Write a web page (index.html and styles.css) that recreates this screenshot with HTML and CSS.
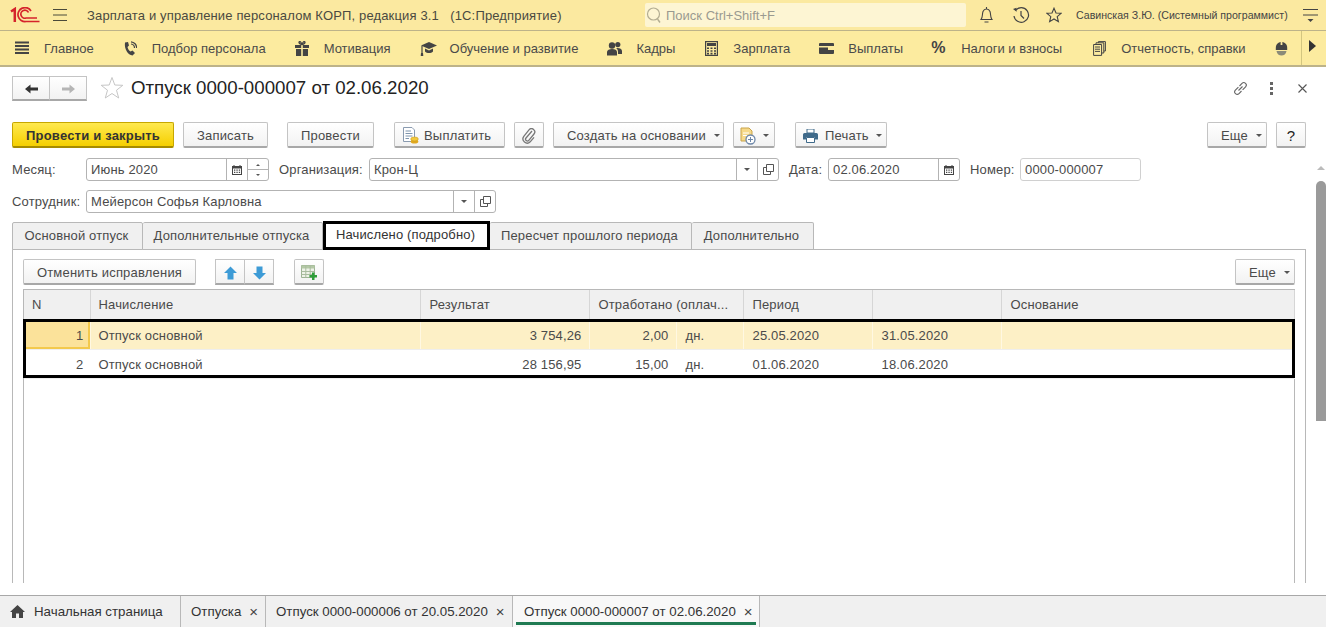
FILE: index.html
```html
<!DOCTYPE html>
<html lang="ru">
<head>
<meta charset="utf-8">
<title>Отпуск 0000-000007 от 02.06.2020</title>
<link rel="stylesheet" href="styles.css">
</head>
<body>
<header class="topbar">
  <svg class="logo" width="30" height="16" viewBox="0 0 30 16"><g fill="none" stroke="#d5232b"><path d="M1 4.500 L4.800 2 V15" stroke-width="2.500"/><path d="M21 4 A7 7 0 1 0 16 14.500 H29.500" stroke-width="1.700"/><path d="M18.500 5.500 A4 4 0 1 0 16 11 H27" stroke-width="1.700"/></g></svg>
  <svg class="burger" width="14" height="12" viewBox="0 0 14 12"><path d="M0 .5H14M0 6H14M0 11.500H14" stroke="#4a4a3a" stroke-width="1"/></svg>
  <div class="app-title">Зарплата и управление персоналом КОРП, редакция 3.1&nbsp;&nbsp;&nbsp;(1С:Предприятие)</div>
  <div class="search">
    <svg width="16" height="18" viewBox="0 0 16 18"><circle cx="7.500" cy="8" r="6" fill="none" stroke="#b3ad92" stroke-width="1.200"/><path d="M11.500 13 L14 16.500" stroke="#b3ad92" stroke-width="1.400"/></svg>
    <span>Поиск Ctrl+Shift+F</span>
  </div>
  <svg class="tb-bell" width="15" height="18" viewBox="0 0 15 18"><path d="M2 13.500 C4 11 3 8 4 5.500 C4.800 3.500 6 3 7.500 3 C9 3 10.200 3.500 11 5.500 C12 8 11 11 13 13.500 Z M7.500 3 V1 M5.500 16 H9.500" fill="none" stroke="#444" stroke-width="1.100"/></svg>
  <svg class="tb-hist" width="18" height="18" viewBox="0 0 18 18"><path d="M3.500 4.500 A7.300 7.300 0 1 1 2 10" fill="none" stroke="#444" stroke-width="1.200"/><path d="M1 3 L4.500 1.800 L4.600 5.800 Z" fill="#444"/><path d="M9 5 V9.500 L12 12.500" fill="none" stroke="#444" stroke-width="1.200"/></svg>
  <svg class="tb-star" width="16" height="16" viewBox="0 0 16 16"><path d="M8 1.200 L10 6 L15 6.300 L11.200 9.600 L12.400 14.700 L8 12 L3.600 14.700 L4.800 9.600 L1 6.300 L6 6 Z" fill="none" stroke="#444" stroke-width="1.100"/></svg>
  <div class="user">Савинская З.Ю. (Системный программист)</div>
  <svg class="tb-menu" width="15" height="16" viewBox="0 0 15 16"><path d="M0 2.500H15M0 8H15" stroke="#444" stroke-width="1"/><path d="M4.500 12 H10.500 L7.500 15 Z" fill="#444"/></svg>
</header>

<nav class="sections">
  <a class="sec">
    <svg width="14" height="14" viewBox="0 0 14 14"><path d="M0 1H14M0 4.500H14M0 8H14M0 11.500H14" stroke="#444" stroke-width="1.800" transform="translate(0 .5)"/></svg>
    <span>Главное</span></a>
  <a class="sec">
    <svg width="14" height="15" viewBox="0 0 14 15"><path d="M2 1.500 L5 1 L6 4.500 L4.500 6 C5 8 6 9.500 7.500 10.500 L9.500 9.500 L12 12 L9.500 14.500 C5 14 1 8 2 1.500Z" fill="#444"/><path d="M8 3 A4 4 0 0 1 11.500 7 M8 .8 A6 6 0 0 1 13.600 7" fill="none" stroke="#444" stroke-width="1.200"/></svg>
    <span>Подбор персонала</span></a>
  <a class="sec">
    <svg width="14" height="15" viewBox="0 0 14 15"><path d="M0 4H6.200V7H0ZM7.800 4H14V7H7.800ZM1 8H6.200V15H1ZM7.800 8H13V15H7.800Z" fill="#444"/><path d="M7 3.500 C5 3 3.500 2 4.200 .8 C5 0 6.500 1.500 7 3.500 C7.500 1.500 9 0 9.800 .8 C10.500 2 9 3 7 3.500Z" fill="none" stroke="#444" stroke-width="1.300"/></svg>
    <span>Мотивация</span></a>
  <a class="sec sec-wide">
    <svg width="17" height="15" viewBox="0 0 17 15"><path d="M9 1 L17 4.500 L9 8 L1 4.500Z" fill="#444"/><path d="M5 7.500 V10.500 C7 12.500 11 12.500 13 10.500 V7.500 L9 9.500Z" fill="#444"/><path d="M2 5 V12" stroke="#444" stroke-width="1.200"/><path d="M1 12 H3 L3.300 15 H.7Z" fill="#444"/></svg>
    <span>Обучение и развитие</span></a>
  <a class="sec sec-staff">
    <svg width="15" height="15" viewBox="0 0 15 15"><circle cx="5" cy="4.500" r="3.200" fill="#444"/><circle cx="10.800" cy="3.600" r="2.600" fill="#444"/><path d="M0 14.500 V11 C0 9 2.500 8 5 8 C8 8 10 9 10 11 V14.500Z" fill="#444"/><path d="M9 7 C12 6.500 15 7.500 15 10 V13 H11 V11 C11 9 10.500 8 9 7Z" fill="#444"/></svg>
    <span>Кадры</span></a>
  <a class="sec">
    <svg width="13" height="15" viewBox="0 0 13 15"><rect x=".6" y=".6" width="11.800" height="13.800" fill="none" stroke="#444" stroke-width="1.200"/><rect x="2" y="2" width="9" height="3" fill="#444"/><path d="M2 6.500h2v1.600h-2zM5.500 6.500h2v1.600h-2zM9 6.500h2v1.600h-2zM2 9.200h2v1.600h-2zM5.500 9.200h2v1.600h-2zM9 9.200h2v1.600h-2zM2 11.800h2v1.600h-2zM5.500 11.800h2v1.600h-2zM9 11.800h2v1.600h-2z" fill="#444"/></svg>
    <span>Зарплата</span></a>
  <a class="sec sec-pay">
    <svg width="15" height="11" viewBox="0 0 15 11"><path d="M0 1 Q0 0 1 0H14Q15 0 15 1V3H0Z" fill="#444"/><path d="M0 4.500H9V7H15V10Q15 11 14 11H1Q0 11 0 10Z" fill="#444"/></svg>
    <span>Выплаты</span></a>
  <a class="sec sec-tax">
    <span class="pct">%</span>
    <span>Налоги и взносы</span></a>
  <a class="sec">
    <svg width="13" height="15" viewBox="0 0 13 15"><path d="M.6 3.500H8.600V14.400H.6Z M3 3.500V1.800H10.800V12H8.600 M5.400 1.800V.6H12.400V10H10.800" fill="none" stroke="#444" stroke-width="1"/><path d="M2 6H7M2 8.200H7M2 10.400H7" stroke="#444" stroke-width="1"/></svg>
    <span>Отчетность, справки</span></a>
  <a class="sec sec-last">
    <svg width="13" height="15" viewBox="0 0 13 15"><path d="M6.500 1 C3 1 .8 3.500 .8 7 V9 H12.200 V7 C12.200 3.500 10 1 6.500 1Z" fill="#444"/><path d="M5.600 .8 H7.400 V4 H5.600Z" fill="#fbe9a0"/><path d="M1.500 10 H11.500 C11 13 9 14.500 6.500 14.500 C4 14.500 2 13 1.500 10Z" fill="#8a8a78"/></svg>
  </a>
  <div class="sec-more"><svg width="7" height="12" viewBox="0 0 7 12"><path d="M0 0 L7 6 L0 12Z" fill="#333"/></svg></div>
</nav>

<main class="form">
  <div class="title-row">
    <div class="btn-group nav-group">
      <button class="btn nav-btn"><svg width="13" height="10" viewBox="0 0 13 10"><path d="M0 5 L5.500 .5 V3.500 H13 V6.500 H5.500 V9.500Z" fill="#333"/></svg></button>
      <button class="btn nav-btn"><svg width="13" height="10" viewBox="0 0 13 10"><path d="M13 5 L7.500 .5 V3.500 H0 V6.500 H7.500 V9.500Z" fill="#b5b5b5"/></svg></button>
    </div>
    <svg class="title-star" width="24" height="24" viewBox="0 0 24 24"><path d="M12 1.500 L14.800 9 L22.800 9.300 L16.500 14.200 L18.700 22 L12 17.500 L5.300 22 L7.500 14.200 L1.200 9.300 L9.200 9 Z" fill="none" stroke="#c6c6c6" stroke-width="1"/></svg>
    <h1 class="doc-title">Отпуск 0000-000007 от 02.06.2020</h1>
    <svg class="t-link" width="15" height="15" viewBox="0 0 15 15"><g fill="none" stroke="#666" stroke-width="1.100"><path d="M6.500 5 L9 2.400 A2.400 2.400 0 0 1 12.600 5.800 L9.600 8.900"/><path d="M8.500 10 L6 12.600 A2.400 2.400 0 0 1 2.400 9.200 L5.400 6.100"/><path d="M5.500 9.500 L9.500 5.500"/></g></svg>
    <svg class="t-dots" width="3" height="13" viewBox="0 0 3 13"><path d="M0 0h3v3h-3zM0 5h3v3h-3zM0 10h3v3h-3z" fill="#666"/></svg>
    <svg class="t-close" width="9" height="9" viewBox="0 0 9 9"><path d="M.5 .5 L8.500 8.500 M8.500 .5 L.5 8.500" stroke="#555" stroke-width="1.100"/></svg>
  </div>

  <div class="cmd-row">
    <button class="btn primary w-post-close">Провести и закрыть</button>
    <button class="btn w-save">Записать</button>
    <button class="btn w-post">Провести</button>
    <button class="btn w-pay">
      <svg width="17" height="17" viewBox="0 0 17 17"><path d="M1.500 .5H10L12.500 3V14.500H1.500Z" fill="#fff" stroke="#8a9bb0"/><path d="M3.500 4H9M3.500 6.500H10.500M3.500 9H10.500M3.500 11.500H7" stroke="#7d94ad"/><ellipse cx="12.500" cy="14.500" rx="3.800" ry="2" fill="#e0a820"/><ellipse cx="12.500" cy="12" rx="3.800" ry="2" fill="#f2c83a" stroke="#c99a1c" stroke-width=".6"/></svg>
      <span>Выплатить</span></button>
    <button class="btn w-clip">
      <svg width="14" height="16" viewBox="0 0 14 16"><path d="M10 3 L4 10 A1.800 1.800 0 0 0 6.800 12.300 L12 6 A3.200 3.200 0 0 0 7 1.900 L1.800 8.400 A4.200 4.200 0 0 0 8.200 13.800 L12 9.400" fill="none" stroke="#777" stroke-width="1.300"/></svg></button>
    <button class="btn w-create">Создать на основании<i class="caret"></i></button>
    <button class="btn w-more-doc">
      <svg width="16" height="18" viewBox="0 0 16 18"><path d="M1 1H9L12 4V14H1Z" fill="#f6d98a" stroke="#c9a44a"/><path d="M3 6H9M3 8.500H7" stroke="#fff"/><circle cx="10.500" cy="12.500" r="4.500" fill="#fff" stroke="#6d87a8" stroke-width="1.300"/><path d="M8 12.500H13M10.500 10V15" stroke="#6d87a8"/></svg>
      <i class="caret"></i></button>
    <button class="btn w-print">
      <svg width="15" height="14" viewBox="0 0 15 14"><path d="M4 0H11V4H4Z" fill="#fff" stroke="#3f6a8a"/><path d="M1.500 4H13.500Q15 4 15 5.500V10.500H12V8H3V10.500H0V5.500Q0 4 1.500 4Z" fill="#3f6a8a"/><path d="M3.500 8.500H11.500V13.500H3.500Z" fill="#fff" stroke="#3f6a8a"/></svg>
      <span>Печать</span><i class="caret"></i></button>
    <div class="spacer"></div>
    <button class="btn w-more">Еще<i class="caret"></i></button>
    <button class="btn w-help">?</button>
  </div>

  <div class="field-row">
    <label class="lbl l-month">Месяц:</label>
    <div class="field f-month"><span class="val">Июнь 2020</span>
      <span class="fb"><svg class="ic" width="10" height="10" viewBox="0 0 10 10"><use href="#cal"/></svg></span>
      <span class="fb spin"><i class="mini-up"></i><i class="mini-down"></i></span></div>
    <label class="lbl l-org">Организация:</label>
    <div class="field f-org"><span class="val">Крон-Ц</span>
      <span class="fb"><i class="caret flat"></i></span>
      <span class="fb"><svg class="ic" width="11" height="11" viewBox="0 0 11 11"><use href="#open"/></svg></span></div>
    <label class="lbl l-date">Дата:</label>
    <div class="field f-date"><span class="val">02.06.2020</span>
      <span class="fb"><svg class="ic" width="10" height="10" viewBox="0 0 10 10"><use href="#cal"/></svg></span></div>
    <label class="lbl l-num">Номер:</label>
    <div class="field f-num"><span class="val">0000-000007</span></div>
  </div>

  <div class="field-row">
    <label class="lbl l-month">Сотрудник:</label>
    <div class="field f-emp"><span class="val">Мейерсон Софья Карловна</span>
      <span class="fb"><i class="caret flat"></i></span>
      <span class="fb"><svg class="ic" width="11" height="11" viewBox="0 0 11 11"><use href="#open"/></svg></span></div>
  </div>

  <div class="tabs">
    <div class="tab t1">Основной отпуск</div>
    <div class="tab t2">Дополнительные отпуска</div>
    <div class="tab t3 active">Начислено (подробно)</div>
    <div class="tab t4">Пересчет прошлого периода</div>
    <div class="tab t5">Дополнительно</div>
  </div>

  <section class="panel">
    <div class="panel-tools">
      <button class="btn w-cancel">Отменить исправления</button>
      <div class="btn-group arrows">
        <button class="btn arrow-btn"><svg width="13" height="14" viewBox="0 0 13 14"><path d="M6.500 .5 L13 7 H9.500 V13.500 H3.500 V7 H0Z" fill="#3d9bd6"/></svg></button>
        <button class="btn arrow-btn"><svg width="13" height="14" viewBox="0 0 13 14"><path d="M6.500 13.500 L13 7 H9.500 V.5 H3.500 V7 H0Z" fill="#3d9bd6"/></svg></button>
      </div>
      <button class="btn w-addcol"><svg width="17" height="16" viewBox="0 0 17 16"><path d="M.5 .5H13.500V12.500H.5Z" fill="#eef2e8" stroke="#9db394"/><path d="M.5 .5H13.500V3.500H.5Z" fill="#b4c9a6"/><path d="M4.800 .5V12.500M9.200 .5V12.500M.5 6.500H13.500M.5 9.500H13.500" stroke="#a9bc9f"/><path d="M11 7.500H13.500V10H16V12.500H13.500V15H11V12.500H8.500V10H11Z" fill="#2f9e3a"/></svg></button>
      <div class="spacer"></div>
      <button class="btn w-more">Еще<i class="caret"></i></button>
    </div>
    <div class="grid-wrap">
      <table class="grid">
        <colgroup><col class="c1"><col class="c2"><col class="c3"><col class="c4"><col class="c5"><col class="c6"><col class="c7"><col class="c8"></colgroup>
        <thead><tr><th class="first">N</th><th class="second">Начисление</th><th>Результат</th><th colspan="2">Отработано (оплач...</th><th>Период</th><th></th><th>Основание</th></tr></thead>
        <tbody>
          <tr class="sel"><td class="num cur first">1</td><td class="second">Отпуск основной</td><td class="num">3 754,26</td><td class="num">2,00</td><td>дн.</td><td>25.05.2020</td><td>31.05.2020</td><td></td></tr>
          <tr><td class="num first">2</td><td class="second">Отпуск основной</td><td class="num">28 156,95</td><td class="num">15,00</td><td>дн.</td><td>01.06.2020</td><td>18.06.2020</td><td></td></tr>
        </tbody>
      </table>
      <div class="highlight"></div>
    </div>
  </section>

  <div class="scrollbar"><i class="sb-up"></i><div class="sb-thumb"></div></div>
</main>

<footer class="taskbar">
  <div class="task home"><svg width="15" height="13" viewBox="0 0 15 13"><path d="M7.500 0 L15 7 H13 V13 H9 V8.500 H6 V13 H2 V7 H0Z" fill="#444"/></svg><span>Начальная страница</span></div>
  <div class="task t-list"><span>Отпуска</span><b>×</b></div>
  <div class="task t-doc6"><span>Отпуск 0000-000006 от 20.05.2020</span><b>×</b></div>
  <div class="task t-doc7 current"><span>Отпуск 0000-000007 от 02.06.2020</span><b>×</b></div>
</footer>

<svg class="defs" width="0" height="0">
  <defs>
    <g id="cal"><path d="M0 1H10V10H0Z" fill="#444"/><path d="M2 0V2M8 0V2" stroke="#444"/><path d="M1 3.500H9V9H1Z" fill="#fff"/><path d="M2 4.500h1.300v1.200H2zM4.400 4.500h1.300v1.200H4.400zM6.800 4.500h1.300v1.200H6.800zM2 6.800h1.300V8H2zM4.400 6.800h1.300V8H4.400zM6.800 6.800h1.300V8H6.800z" fill="#444"/></g>
    <g id="open"><path d="M3.500 .5H10.500V7.500H3.500Z" fill="none" stroke="#555"/><path d="M3.500 3.500H.5V10.500H7.500V7.500" fill="none" stroke="#555"/></g>
  </defs>
</svg>
</body>
</html>
```
FILE: styles.css
```css
* { box-sizing: border-box; }
html, body { margin: 0; height: 100%; }
body {
  width: 1326px; height: 627px; overflow: hidden;
  display: flex; flex-direction: column;
  font-family: "Liberation Sans", Arial, sans-serif;
  font-size: 13px; color: #4a4a4a; background: #fff;
}
svg { display: block; flex: none; }
.defs { position: absolute; }
.spacer { flex: 1; }

/* top bar */
.topbar {
  height: 31px; flex: none; display: flex; align-items: center;
  background: #fbe9a0; border-bottom: 1px solid #bdb389; padding-left: 10px;
}
.logo { margin-right: 13px; }
.burger { margin-right: 20px; }
.app-title { width: 558px; font-size: 13px; color: #4a4a40; white-space: nowrap; letter-spacing: .15px; }
.search {
  width: 321px; height: 24px; background: #fdf5d3; border-radius: 2px;
  display: flex; align-items: center; gap: 4px; padding-left: 1px; color: #9a9a90; font-size: 13px;
}
.tb-bell { margin-left: 13px; }
.tb-hist { margin-left: 18px; }
.tb-star { margin-left: 16px; }
.user { margin-left: 14px; width: 227px; font-size: 10.6px; color: #444; white-space: nowrap; }

/* sections */
.sections {
  height: 36px; flex: none; display: flex; align-items: center;
  background: #fceb9f; border-bottom: 2px solid #bdb389; padding-left: 15px; position: relative;
}
.sec { display: flex; align-items: center; color: #4a4a4a; font-size: 13px; white-space: nowrap; margin-right: 29px; }
.sec svg, .pct { margin-right: 15px; }
.sec-wide svg { margin-right: 13px; }
.sec-staff svg { margin-right: 14px; }
.sec-staff { margin-right: 30px; }
.sec-pay svg { margin-right: 14px; }
.sec-pay { margin-right: 28px; }
.sec-tax { margin-right: 31px; }
.pct { font-size: 16px; font-weight: 700; color: #444; width: 15px; }
.sec-last { margin-right: 0; }
.sec-last svg { margin-right: 0; }
.sec-more {
  position: absolute; right: 0; top: 0; bottom: 0; width: 25px;
  border-left: 1px solid #d3c680; display: flex; align-items: center; padding: 0 0 4px 7px;
}

/* form */
.form { flex: none; height: 528px; overflow: hidden; position: relative; padding: 0 20px 0 12px; }
.title-row { height: 55px; display: flex; align-items: center; padding-bottom: 13px; }
.doc-title { margin: 0 0 0 7px; font-size: 18.7px; font-weight: 400; color: #222; flex: 1; line-height: 42px; }
.title-star { margin-left: 13px; }
.nav-group { width: 75px; }
.t-link { margin-right: 22px; }
.t-dots { margin-right: 25px; }
.t-close { margin-right: -1px; }

.btn {
  height: 26px; padding: 2px 0 0; margin: 0; display: inline-flex; align-items: center; justify-content: center;
  font: inherit; font-size: 13px; color: #4a4a4a; letter-spacing: .2px;
  background: linear-gradient(#fff, #f2f2f2);
  border: 1px solid #c4c4c4; border-bottom: 2px solid #a8a8a8; border-radius: 2px;
}
.btn-group { display: flex; height: 25px; }
.btn-group .btn { flex: 1; height: 100%; border-radius: 0; }
.btn-group .btn + .btn { margin-left: -1px; }

.cmd-row { display: flex; height: 26px; }
.cmd-row .btn { margin-right: 9px; }
.primary {
  background: linear-gradient(#ffe94f, #f5cf00); border-color: #c7a700; border-bottom-color: #a68b00;
  font-weight: 700; color: #333;
}
.w-post-close { width: 162px; }
.w-save { width: 85px; margin-right: 19px !important; }
.w-post { width: 87px; margin-right: 20px !important; }
.w-pay { width: 111px; gap: 5px; justify-content: flex-start; padding-left: 7px; }
.w-clip { width: 30px; }
.w-create { width: 171px; justify-content: flex-start; padding-left: 13px; }
.w-create .caret { margin-left: 8px; }
.w-more-doc { width: 42px; margin-right: 20px !important; }
.w-print { width: 92px; gap: 7px; justify-content: flex-start; padding-left: 7px; }
.w-print .caret { margin-left: 0; }
.w-more { width: 60px; justify-content: flex-start; padding-left: 13px; }
.w-more .caret { margin-left: 8px; }
.w-help { width: 30px; margin-right: 0 !important; font-size: 15px; color: #222; }
.caret { display: inline-block; width: 0; height: 0; margin-left: 7px; border: 3px solid transparent; border-top-color: #555; border-bottom: 0; }
.caret.flat { margin: 0; }

.field-row { display: flex; align-items: center; height: 23px; margin-top: 10px; }
.field-row + .field-row { margin-top: 9px; }
.lbl { color: #4a4a4a; white-space: nowrap; letter-spacing: .15px; }
.l-month { width: 74px; }
.l-org { width: 90px; margin-left: 10px; }
.l-date { width: 39px; margin-left: 10px; }
.l-num { width: 50px; margin-left: 10px; }
.field {
  height: 23px; display: flex; border: 1px solid #b3b3b3; border-radius: 3px; background: #fff;
}
.f-month { width: 183px; }
.f-org { width: 410px; }
.f-date { width: 132px; }
.f-num { width: 121px; border-color: #d0d0d0; }
.f-emp { width: 410px; }
.val { flex: 1; padding-left: 4px; line-height: 21px; color: #4a4a4a; letter-spacing: .15px; white-space: nowrap; }
.fb { width: 21px; border-left: 1px solid #b3b3b3; display: flex; align-items: center; justify-content: center; }
.spin { flex-direction: column; position: relative; gap: 8px; }
.spin::after { content: ""; position: absolute; left: 0; right: 0; top: 10px; border-top: 1px solid #b3b3b3; }
.mini-up, .mini-down { width: 0; height: 0; border: 2px solid transparent; }
.mini-up { border-bottom-color: #555; border-top: 0; }
.mini-down { border-top-color: #555; border-bottom: 0; }

/* tabs */
.tabs { display: flex; height: 27px; margin-top: 9px; position: relative; z-index: 1; }
.tab {
  height: 28px; padding-right: 2px; background: #f0f0f0; border: 1px solid #b8b8b8; border-left: 0; border-radius: 2px 2px 0 0;
  color: #4a4a4a; line-height: 25px; text-align: center; white-space: nowrap; letter-spacing: .15px;
}
.t1 { width: 131px; border-left: 1px solid #b8b8b8; }
.t2 { width: 180px; }
.t3 { width: 167px; }
.t4 { width: 202px; }
.t5 { width: 122px; }
.tab.active {
  background: #fff; border: 3px solid #000; border-radius: 0; height: 29px; margin-top: -1px; line-height: 22px; color: #333;
}

.panel { height: 334px; border: 1px solid #b8b8b8; border-bottom: 0; padding: 9px 10px 0 10px; width: 1294px; }
.panel-tools { display: flex; height: 26px; }
.w-cancel { width: 173px; margin-right: 19px; }
.arrows { width: 59px; height: 26px; margin-right: 20px; }
.w-addcol { width: 30px; }
.grid-wrap { position: relative; margin-top: 4px; height: 294px; border: 1px solid #b8b8b8; border-bottom: 0; }
.grid { border-collapse: collapse; table-layout: fixed; width: 1270px; }
.c1 { width: 66px; } .c2 { width: 330px; } .c3 { width: 169px; } .c4 { width: 87px; }
.c5 { width: 67px; } .c6 { width: 129px; } .c7 { width: 129px; } .c8 { width: 293px; }
.grid th {
  height: 30px; background: #f0f0f0; font-weight: 400; text-align: left; color: #4a4a4a; padding: 0 8px 2px 9px;
  border-right: 1px solid #d6d6d6; white-space: nowrap; overflow: hidden; letter-spacing: .15px;
}
.grid th.first { padding-left: 8px; }
.grid th.second { padding-left: 8px; }
.grid td { height: 29px; padding: 2px 7px 0 9px; color: #4a4a4a; border-right: 1px solid #fff; border-bottom: 1px solid #eee; letter-spacing: .15px; }
.grid td.second { padding-left: 8px; }
.grid .num { text-align: right; }
.grid .num.first { padding-right: 6px; }
.sel td { background: #fdf0c6; border-right-color: #fff8e2; }
.sel .cur { background: #fbe29a; box-shadow: inset -2px -2px 0 #f3c94c; }
.highlight { position: absolute; left: -1px; right: -1px; top: 29px; height: 59px; border: 3px solid #000; pointer-events: none; }

.scrollbar { position: absolute; right: 0; top: 96px; width: 10px; bottom: 11px; background: #fff; }
.sb-up { display: block; width: 0; height: 0; margin: 3px auto 0; border: 4px solid transparent; border-bottom-color: #bbb; border-top: 0; }
.sb-thumb { position: absolute; top: 18px; left: 0; right: 0; height: 240px; background: #9a9a9a; border-radius: 5px 5px 0 0; }

/* task bar */
.taskbar { flex: 1; display: flex; background: #f0f0f0; border-top: 1px solid #a8a8a8; color: #333; font-size: 13.3px; }
.task { display: flex; align-items: center; height: 100%; border-right: 1px solid #b8b8b8; white-space: nowrap; position: relative; }
.task b { font-weight: 400; font-size: 15px; margin-left: 8px; color: #444; }
.home { width: 181px; padding-left: 10px; gap: 9px; }
.t-list { width: 85px; padding-left: 10px; }
.t-doc6 { width: 247px; padding-left: 10px; }
.t-doc7 { width: 247px; padding-left: 11px; background: #f8f8f8; }
.current::after { content: ""; position: absolute; left: 3px; right: 3px; bottom: 2px; height: 3px; background: #1f7a52; }
```
